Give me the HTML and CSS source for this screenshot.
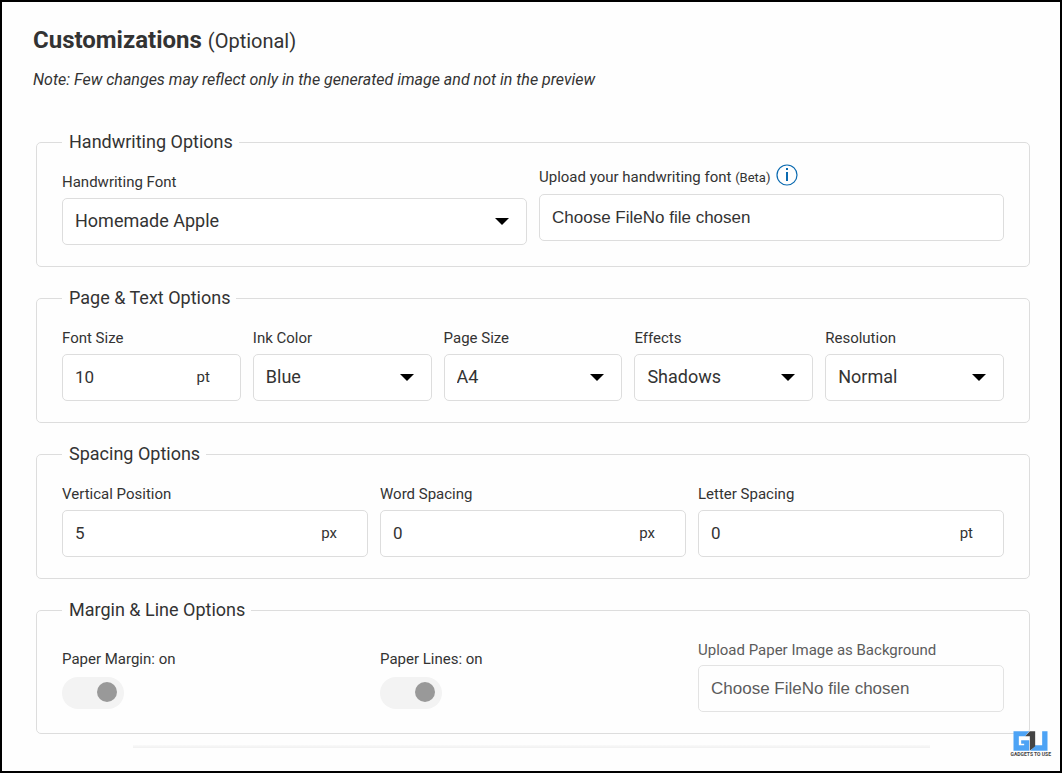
FILE: index.html
```html
<!DOCTYPE html>
<html lang="en">
<head>
<meta charset="utf-8">
<meta name="viewport" content="width=device-width, initial-scale=1">
<title>Customizations</title>
<link rel="stylesheet" href="styles.css">
</head>
<body>
<main class="page">
  <h1 class="title">Customizations <small class="title-note">(Optional)</small></h1>
  <p class="note">Note: Few changes may reflect only in the generated image and not in the preview</p>

  <form class="options">
    <fieldset class="group">
      <legend class="legend">Handwriting Options</legend>
      <div class="row cols-2">
        <div class="field">
          <label class="label" for="font">Handwriting Font</label>
          <select class="control select" id="font"><option>Homemade Apple</option></select>
        </div>
        <div class="field raised">
          <div class="label-line">
            <label class="label" for="font-file">Upload your handwriting font <small class="beta">(Beta)</small></label>
            <button class="info" type="button" aria-label="About font upload">
              <svg viewBox="0 0 22 22" width="22" height="22" fill="none" stroke="#0a6ab0">
                <circle cx="11" cy="11" r="10" stroke-width="1.2"/>
                <path d="M11 8V17" stroke-width="2"/>
                <path d="M11 4V6" stroke-width="2"/>
              </svg>
            </button>
          </div>
          <input class="control file" type="file" id="font-file">
        </div>
      </div>
    </fieldset>

    <fieldset class="group">
      <legend class="legend">Page &amp; Text Options</legend>
      <div class="row cols-5">
        <div class="field">
          <label class="label" for="font-size">Font Size</label>
          <div class="control with-unit"><input class="number" type="number" id="font-size" value="10"><span class="unit">pt</span></div>
        </div>
        <div class="field">
          <label class="label" for="ink">Ink Color</label>
          <select class="control select" id="ink"><option>Blue</option></select>
        </div>
        <div class="field">
          <label class="label" for="page-size">Page Size</label>
          <select class="control select" id="page-size"><option>A4</option></select>
        </div>
        <div class="field">
          <label class="label" for="effects">Effects</label>
          <select class="control select" id="effects"><option>Shadows</option></select>
        </div>
        <div class="field">
          <label class="label" for="resolution">Resolution</label>
          <select class="control select" id="resolution"><option>Normal</option></select>
        </div>
      </div>
    </fieldset>

    <fieldset class="group">
      <legend class="legend">Spacing Options</legend>
      <div class="row cols-3">
        <div class="field">
          <label class="label" for="vertical">Vertical Position</label>
          <div class="control with-unit"><input class="number" type="number" id="vertical" value="5"><span class="unit">px</span></div>
        </div>
        <div class="field">
          <label class="label" for="word">Word Spacing</label>
          <div class="control with-unit"><input class="number" type="number" id="word" value="0"><span class="unit">px</span></div>
        </div>
        <div class="field">
          <label class="label" for="letter">Letter Spacing</label>
          <div class="control with-unit"><input class="number" type="number" id="letter" value="0"><span class="unit">pt</span></div>
        </div>
      </div>
    </fieldset>

    <fieldset class="group">
      <legend class="legend">Margin &amp; Line Options</legend>
      <div class="row row-short cols-3">
        <div class="field field-toggle">
          <label class="label" for="margin">Paper Margin: on</label>
          <input class="toggle" type="checkbox" id="margin" checked>
        </div>
        <div class="field field-toggle">
          <label class="label" for="lines">Paper Lines: on</label>
          <input class="toggle" type="checkbox" id="lines" checked>
        </div>
        <div class="field muted">
          <label class="label" for="paper-file">Upload Paper Image as Background</label>
          <input class="control file" type="file" id="paper-file">
        </div>
      </div>
    </fieldset>
  </form>
  <hr class="divider">

  <div class="watermark">
    <svg class="watermark-logo" viewBox="0 0 104 60" aria-hidden="true">
      <path fill="#4da3f5" d="M1 1H48L36 16H17V43H33V38H24V28H48V59H1Z"/>
      <path fill="#4da3f5" d="M66 43H87V1H103V59H52Z"/>
      <path fill="#444" d="M36 16L50 1H66V46L50 59V16Z"/>
    </svg>
    <span class="watermark-text">GADGETS TO USE</span>
  </div>
</main>
</body>
</html>
```
FILE: styles.css
```css
* {
  box-sizing: border-box;
}

body {
  margin: 0;
  background: #fefefe;
  color: #333;
  font-family: Roboto, "Liberation Sans", sans-serif;
}

.page {
  position: relative;
  min-height: 100vh;
  padding: 22px 30px 0 31px;
  border: 2px solid #000;
}

.title {
  margin: 0;
  font-size: 24px;
  line-height: 32px;
}

.title-note {
  font-size: 20px;
  font-weight: 400;
}

.note {
  margin: 11px 0 0;
  font-size: 16px;
  font-style: italic;
  line-height: 24px;
}

.options {
  display: grid;
  gap: 20px;
  margin: 39px 0 0 3px;
}

.group {
  min-width: 0;
  margin: 0;
  padding: 0 25px 21px;
  border: 1px solid #ddd;
  border-radius: 5px;
}

.legend {
  padding: 0 6px 0 7px;
  font-size: 18px;
  line-height: 22px;
}

.row {
  display: grid;
  gap: 12px;
  align-items: end;
  min-height: 92px;
}

.row-short {
  min-height: 91px;
}

.cols-2 {
  grid-template-columns: repeat(2, minmax(0, 1fr));
}

.cols-3 {
  grid-template-columns: repeat(3, minmax(0, 1fr));
}

.cols-5 {
  grid-template-columns: repeat(5, minmax(0, 1fr));
}

.field {
  display: grid;
  grid-template-columns: minmax(0, 1fr);
  gap: 6px;
}

.raised {
  padding-bottom: 4px;
}

.field-toggle {
  gap: 8px;
  padding-bottom: 3px;
}

.muted {
  gap: 5px;
  opacity: 0.8;
}

.label {
  font-size: 15px;
  line-height: 20px;
}

.label-line {
  display: flex;
  align-items: flex-end;
  gap: 6px;
}

.beta {
  font-size: 13px;
}

.info {
  padding: 0 0 2px;
  border: 0;
  background: none;
  line-height: 0;
}

.control {
  width: 100%;
  height: 47px;
  padding: 0 12px 2px;
  border: 1px solid #ddd;
  border-radius: 5px;
  background-color: #fff;
  color: #333;
  font-family: inherit;
  font-size: 18px;
}

.select {
  appearance: none;
  background-image: url("data:image/svg+xml,%3Csvg xmlns='http://www.w3.org/2000/svg' viewBox='0 0 14 7'%3E%3Cpath d='M0 0H14L7 7Z'/%3E%3C/svg%3E");
  background-position: right 17px center;
  background-repeat: no-repeat;
  background-size: 14px 7px;
}

.file {
  font-family: "Liberation Sans", Arial, sans-serif;
  font-size: 17px;
  line-height: 45px;
}

.file::file-selector-button {
  margin: 0;
  padding: 0;
  border: 0;
  background: none;
  color: inherit;
  font: inherit;
}

.with-unit {
  display: flex;
  align-items: center;
  padding-right: 30px;
}

.number {
  flex: 1;
  width: 0;
  min-width: 0;
  padding: 0;
  border: 0;
  background: none;
  color: inherit;
  font-family: inherit;
  font-size: 17px;
  appearance: textfield;
}

.number::-webkit-inner-spin-button {
  appearance: none;
  margin: 0;
}

.unit {
  font-size: 15px;
}

.toggle {
  appearance: none;
  display: flex;
  align-items: center;
  justify-content: flex-end;
  width: 62px;
  height: 32px;
  margin: 0;
  padding: 0 7px 2px;
  border-radius: 16px;
  background: #f3f3f3;
}

.toggle::before {
  content: "";
  width: 20px;
  height: 20px;
  border-radius: 50%;
  background: #999;
}

.toggle:not(:checked) {
  justify-content: flex-start;
}

.divider {
  width: 80%;
  height: 3px;
  margin: 11px auto 0;
  border: 0;
  background: linear-gradient(#fafafa, #f0f0f0);
}

.watermark {
  position: absolute;
  right: 9px;
  bottom: 13px;
  display: grid;
  justify-items: center;
}

.watermark-logo {
  width: 35px;
  height: 20px;
}

.watermark-text {
  color: #444;
  font-size: 5px;
  font-weight: 700;
  line-height: 7px;
  white-space: nowrap;
}
```
